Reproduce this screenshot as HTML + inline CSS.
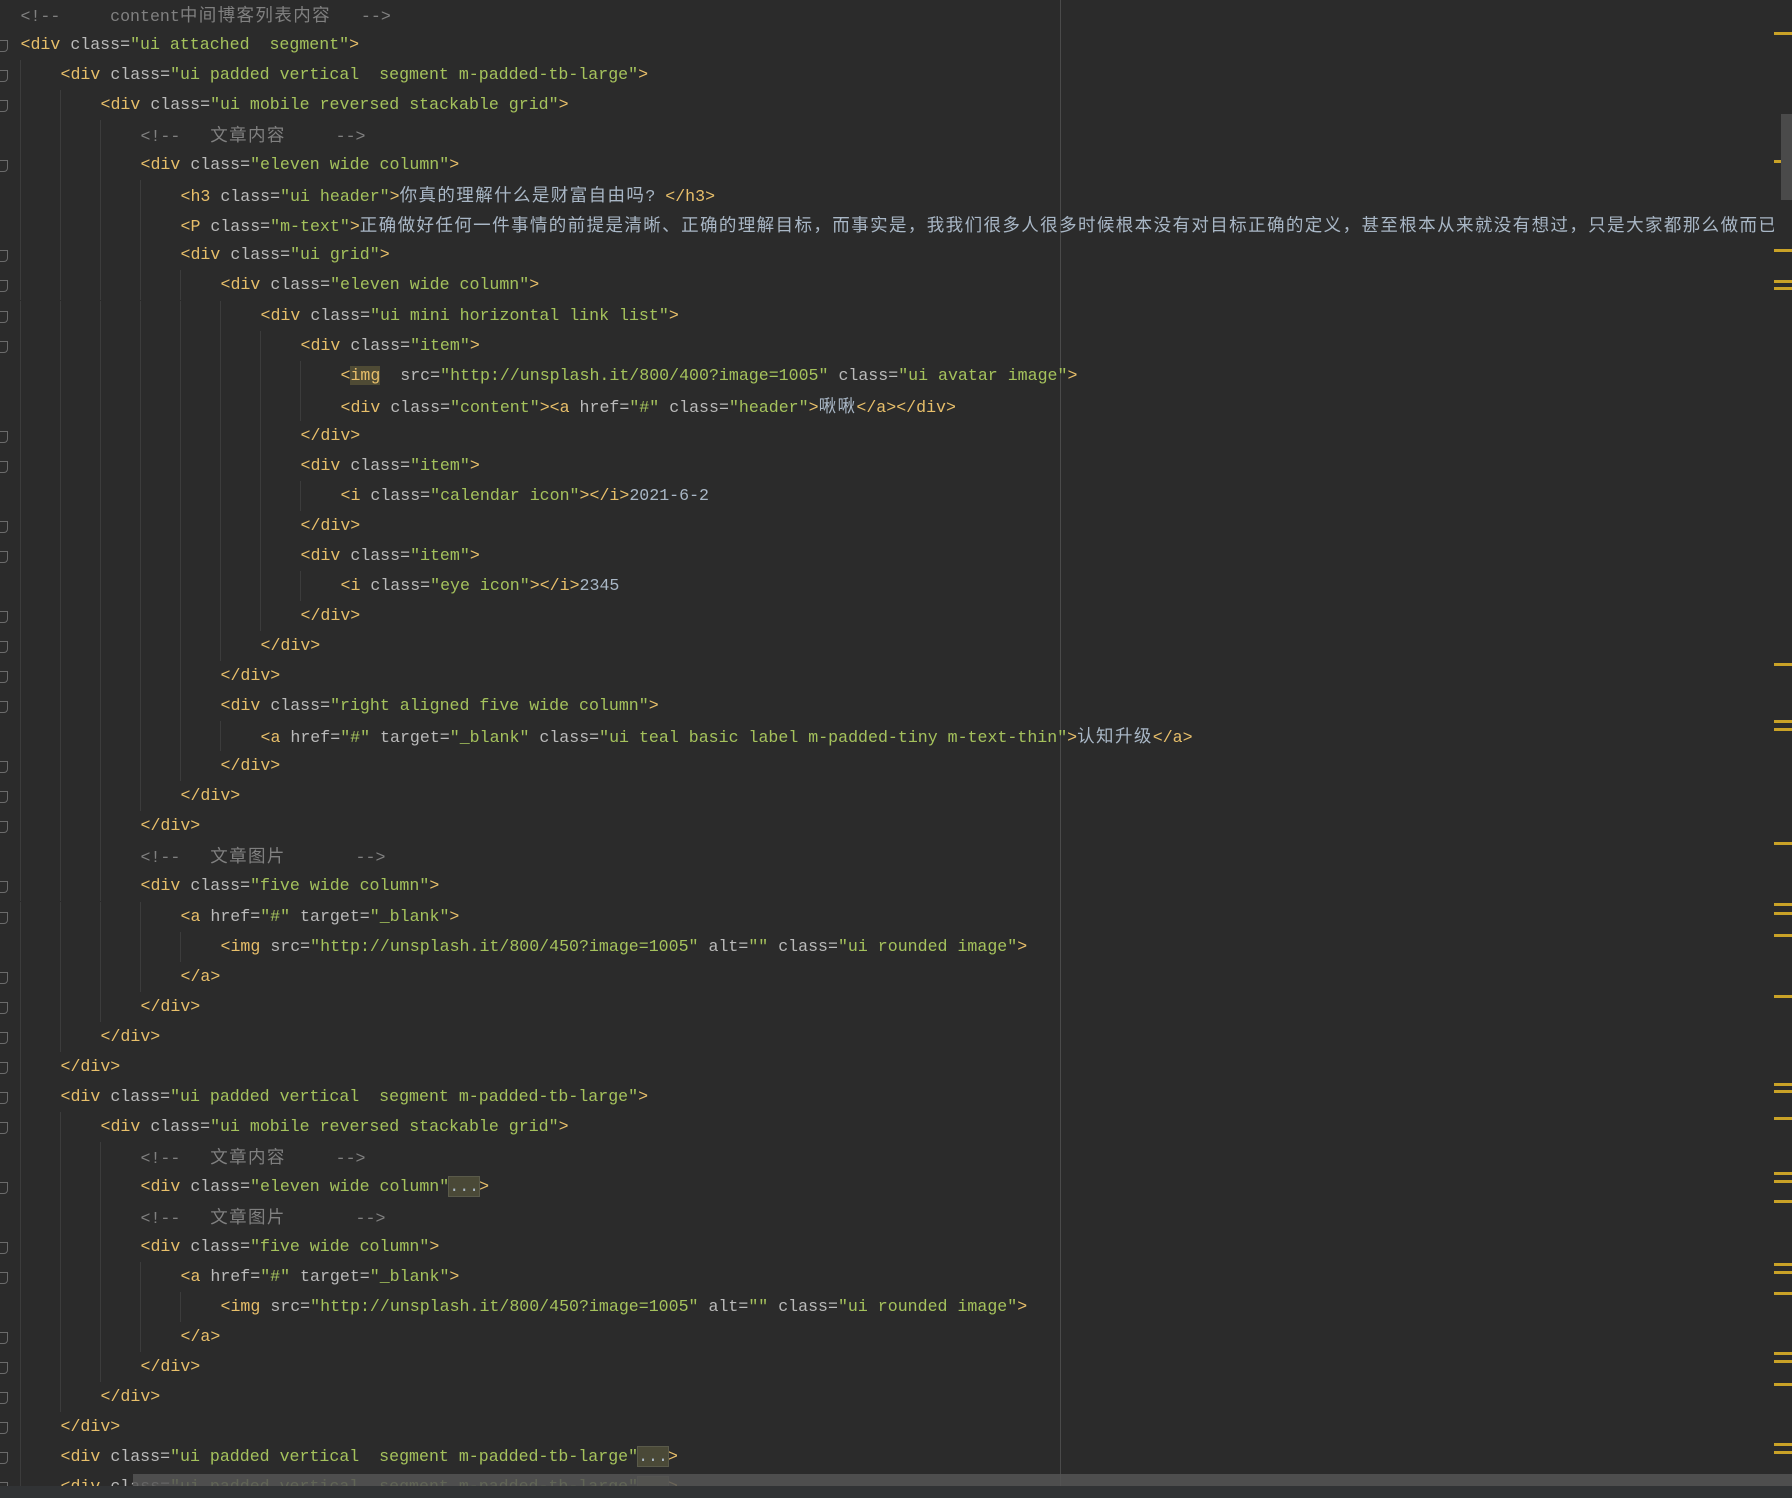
<!DOCTYPE html>
<html><head><meta charset="utf-8">
<style>
html,body{margin:0;padding:0;}
body{width:1792px;height:1498px;background:#2b2b2b;overflow:hidden;position:relative;font-family:"Liberation Mono","Noto Sans CJK SC",monospace;font-size:16.6px;}
#c{position:absolute;left:0;top:0;width:1774px;height:1498px;overflow:hidden}
.l{position:absolute;left:0;height:30px;line-height:30px;white-space:pre;color:#a9b7c6;}
.t{color:#e8bf6a}.a{color:#bababa}.v{color:#a5c25c}.x{color:#a9b7c6}.c{color:#808080}
.k{font-family:"Noto Sans CJK SC",sans-serif;font-size:17.5px;letter-spacing:1.4px;}
.hl{background:#4f4b35}
.fd{background:#4a4937;outline:1px solid #5a5a4a;color:#a9b7c6}
.g{position:absolute;width:1px;background:#3c3c3c;height:30px}
.mk{position:absolute;left:1774px;width:18px;height:3px;background:#c9a227}
.fi{position:absolute;left:0;width:7px;height:10px;border:1px solid #6b6b6b;border-left:none;border-radius:0 0 4px 0}
</style></head><body>
<div style="position:absolute;left:1060px;top:0;width:1px;height:1486px;background:#4a4a4a"></div>
<div id="c"></div>
<div id="m"></div>
<div style="position:absolute;left:1781px;top:114px;width:11px;height:86px;background:#4a4a4a"></div>
<div style="position:absolute;left:133px;top:1474px;width:1659px;height:12px;background:rgba(85,85,85,0.85)"></div>
<div style="position:absolute;left:0;top:1486px;width:1792px;height:12px;background:#313335"></div>
<script>
var T=s=>'<span class="t">'+s+'</span>',A=s=>'<span class="a">'+s+'</span>',V=s=>'<span class="v">'+s+'</span>',K=s=>'<span class="k">'+s+'</span>',C=s=>'<span class="c">'+s+'</span>';
function tag(n,attrs){var s=T('&lt;'+n);attrs.forEach(function(p){s+=' '+A(p[0]+'=')+V('"'+p[1]+'"')});return s;}
var CL=T('&gt;');
var L=[
[0,C('&lt;!--     content'+K('中间博客列表内容')+'   --&gt;')],
[1,tag('div',[['class','ui attached  segment']])+CL],
[1,tag('div',[['class','ui padded vertical  segment m-padded-tb-large']])+CL],
[1,tag('div',[['class','ui mobile reversed stackable grid']])+CL],
[0,C('&lt;!--   '+K('文章内容')+'     --&gt;')],
[1,tag('div',[['class','eleven wide column']])+CL],
[1,tag('h3',[['class','ui header']])+CL+K('你真的理解什么是财富自由吗')+'? '+T('&lt;/h3&gt;')],
[1,tag('P',[['class','m-text']])+CL+K('正确做好任何一件事情的前提是清晰、正确的理解目标，而事实是，我我们很多人很多时候根本没有对目标正确的定义，甚至根本从来就没有想过，只是大家都那么做而已.')],
[1,tag('div',[['class','ui grid']])+CL],
[1,tag('div',[['class','eleven wide column']])+CL],
[1,tag('div',[['class','ui mini horizontal link list']])+CL],
[1,tag('div',[['class','item']])+CL],
[1,T('&lt;<span class="hl">img</span>')+'  '+A('src=')+V('"http://unsplash.it/800/400?image=1005"')+' '+A('class=')+V('"ui avatar image"')+CL],
[1,tag('div',[['class','content']])+CL+tag('a',[['href','#'],['class','header']])+CL+K('啾啾')+T('&lt;/a&gt;&lt;/div&gt;')],
[1,T('&lt;/div&gt;')],
[1,tag('div',[['class','item']])+CL],
[1,tag('i',[['class','calendar icon']])+CL+T('&lt;/i&gt;')+'2021-6-2'],
[1,T('&lt;/div&gt;')],
[1,tag('div',[['class','item']])+CL],
[1,tag('i',[['class','eye icon']])+CL+T('&lt;/i&gt;')+'2345'],
[1,T('&lt;/div&gt;')],
[1,T('&lt;/div&gt;')],
[1,T('&lt;/div&gt;')],
[1,tag('div',[['class','right aligned five wide column']])+CL],
[1,tag('a',[['href','#'],['target','_blank'],['class','ui teal basic label m-padded-tiny m-text-thin']])+CL+K('认知升级')+T('&lt;/a&gt;')],
[1,T('&lt;/div&gt;')],
[1,T('&lt;/div&gt;')],
[1,T('&lt;/div&gt;')],
[0,C('&lt;!--   '+K('文章图片')+'       --&gt;')],
[1,tag('div',[['class','five wide column']])+CL],
[1,tag('a',[['href','#'],['target','_blank']])+CL],
[1,tag('img',[['src','http://unsplash.it/800/450?image=1005'],['alt',''],['class','ui rounded image']])+CL],
[1,T('&lt;/a&gt;')],
[1,T('&lt;/div&gt;')],
[1,T('&lt;/div&gt;')],
[1,T('&lt;/div&gt;')],
[1,tag('div',[['class','ui padded vertical  segment m-padded-tb-large']])+CL],
[1,tag('div',[['class','ui mobile reversed stackable grid']])+CL],
[0,C('&lt;!--   '+K('文章内容')+'     --&gt;')],
[1,tag('div',[['class','eleven wide column']])+'<span class="fd">...</span>'+CL],
[0,C('&lt;!--   '+K('文章图片')+'       --&gt;')],
[1,tag('div',[['class','five wide column']])+CL],
[1,tag('a',[['href','#'],['target','_blank']])+CL],
[1,tag('img',[['src','http://unsplash.it/800/450?image=1005'],['alt',''],['class','ui rounded image']])+CL],
[1,T('&lt;/a&gt;')],
[1,T('&lt;/div&gt;')],
[1,T('&lt;/div&gt;')],
[1,T('&lt;/div&gt;')],
[1,tag('div',[['class','ui padded vertical  segment m-padded-tb-large']])+'<span class="fd">...</span>'+CL],
[1,tag('div',[['class','ui padded vertical  segment m-padded-tb-large']])+'<span class="fd">...</span>'+CL]
];
var ind=[0,0,1,2,3,3,4,4,4,5,6,7,8,8,7,7,8,7,7,8,7,6,5,5,6,5,4,3,3,3,4,5,4,3,2,1,1,2,3,3,3,3,4,5,4,3,2,1,1,1];
var folds=[1,2,3,5,8,9,10,11,14,15,17,18,20,21,22,23,25,26,27,29,30,32,33,34,35,36,37,39,41,42,44,45,46,47,48,49];
var h='';
for(var i=0;i<L.length;i++){
 var y=i*30.05;
 for(var k=0;k<ind[i];k++){h+='<div class="g" style="left:'+(20+40*k)+'px;top:'+y+'px"></div>';}
 h+='<div class="l" style="top:'+y+'px;left:'+(20.5+40*ind[i])+'px">'+L[i][1]+'</div>';
}
folds.forEach(function(i){h+='<div class="fi" style="top:'+(i*30.05+10)+'px"></div>';});
document.getElementById('c').innerHTML=h;
var m=[32,160,249,280,287,663,720,728,842,903,912,934,995,1083,1090,1117,1172,1180,1200,1263,1271,1292,1352,1360,1383,1443,1451],hm='';
m.forEach(function(y){hm+='<div class="mk" style="top:'+y+'px"></div>';});
document.getElementById('m').innerHTML=hm;
</script>
</body></html>
